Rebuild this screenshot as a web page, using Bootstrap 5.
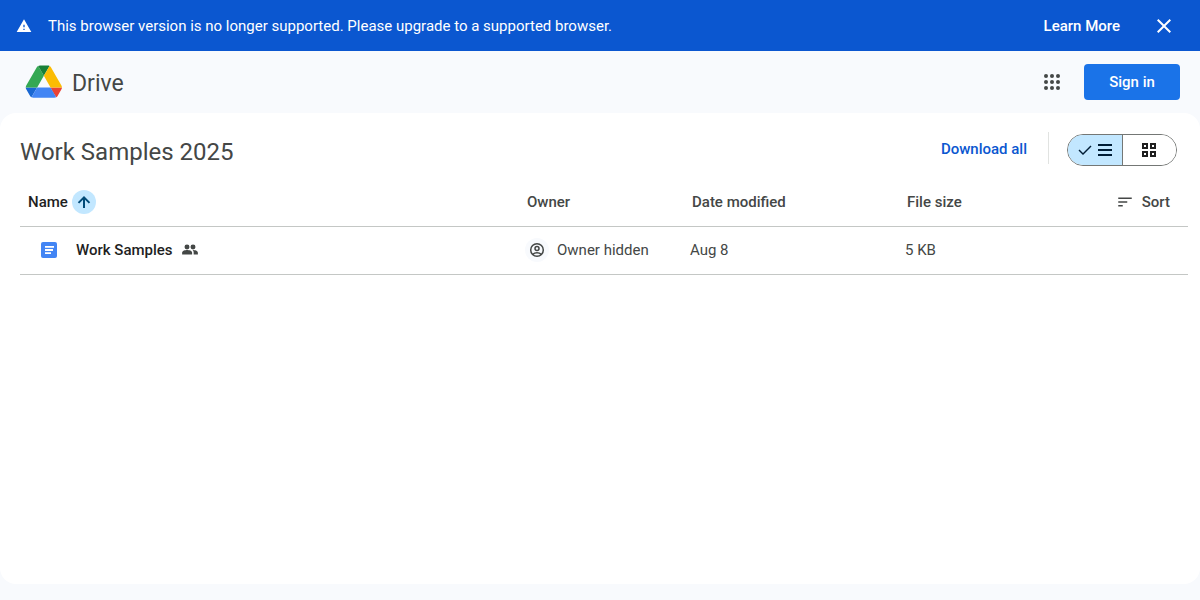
<!DOCTYPE html>
<html lang="en">
<head>
<meta charset="utf-8">
<meta name="viewport" content="width=device-width, initial-scale=1">
<title>Work Samples 2025 - Drive</title>
<link href="https://cdn.jsdelivr.net/npm/bootstrap@5.3.0/dist/css/bootstrap.min.css" rel="stylesheet">
<style>
  body { font-family: "Google Sans", Roboto, "Liberation Sans", sans-serif; font-size: 15px; line-height: 20px; color: #444746; background: #f8fafd; }
  svg { display: block; flex: none; fill: currentColor; }
  .btn { font-size: 15px; line-height: 20px; }
  .notice { background: #0b57d0; height: 51px; }
  .topbar { height: 62px; }
  .brand { font-size: 23px; line-height: 28px; color: #444746; }
  .signin { width: 96px; height: 36px; background: #1a73e8; border-radius: 4px; }
  .panel { background: #fff; border-radius: 16px; margin-bottom: 16px; padding: 19px 12px 0 20px; }
  .toolbar { height: 46px; padding-right: 11px; }
  .heading { font-size: 24px; line-height: 40px; }
  .download { color: #0b57d0; line-height: 34px; }
  .divider { width: 1px; height: 32px; background: #e1e3e1; margin: 0 18px 0 21px; }
  .views { width: 110px; height: 32px; margin-top: 2px; border: 1px solid #747775; border-radius: 16px; overflow: hidden; }
  .views button { flex: 1 1 0; background: #fff; color: #1f1f1f; }
  .views .chosen { background: #c2e7ff; color: #001d35; border-right: 1px solid #747775 !important; }
  .files { table-layout: fixed; width: 100%; }
  .files th, .files td { height: 48px; padding: 0; border-bottom: 1px solid #c4c7c5; vertical-align: middle; font-weight: 400; }
  .files thead th, .files tbody th, .strong { font-weight: 500; }
  .files thead th + th { padding-left: 2px; }
  .files .ink { color: #1f1f1f; }
  .file-cell { padding-left: 20px; gap: 8px; }
  .file-name { padding-left: 10px; }
  .sort { color: #444746; margin-right: 18px; }
  .arrow { width: 24px; height: 24px; background: #c2e7ff; color: #004a77; }
  .avatar { width: 24px; height: 24px; background: #f8fafd; }
</style>
</head>
<body class="d-flex flex-column min-vh-100">
  <div class="notice d-flex align-items-center text-white px-3" role="alert">
    <svg width="16" height="16" viewBox="0 0 24 24"><path d="M1 21h22L12 2 1 21zm12-3h-2v-2h2v2zm0-4h-2v-4h2v4z"/></svg>
    <span class="ms-3">This browser version is no longer supported. Please upgrade to a supported browser.</span>
    <a href="#" class="ms-auto text-white text-decoration-none strong">Learn More</a>
    <button type="button" class="btn border-0 p-0 text-white ms-4 me-2" aria-label="Close"><svg class="ms-2" width="24" height="24" viewBox="0 0 24 24"><path d="M19 6.41 17.59 5 12 10.59 6.41 5 5 6.41 10.59 12 5 17.59 6.41 19 12 13.41 17.59 19 19 17.59 13.41 12z"/></svg></button>
  </div>

  <header class="topbar d-flex align-items-center ps-4 pe-3">
    <a href="#" class="brand d-flex align-items-center text-decoration-none">
      <svg class="me-2" width="40" height="34" viewBox="0 0 96 82">
        <g transform="translate(4 1)">
          <path fill="#1967d2" d="m6.6 66.85 3.85 6.65c.8 1.4 1.95 2.5 3.3 3.3l13.75-23.8h-27.5c0 1.55.4 3.1 1.2 4.5z"/>
          <path fill="#34a853" d="m43.65 25-13.75-23.8c-1.35.8-2.5 1.9-3.3 3.3l-25.4 44a9.06 9.06 0 0 0 -1.2 4.5h27.5z"/>
          <path fill="#ea4335" d="m73.55 76.8c1.35-.8 2.5-1.9 3.3-3.3l1.6-2.75 7.65-13.25c.8-1.4 1.2-2.95 1.2-4.5h-27.5l5.85 11.5z"/>
          <path fill="#188038" d="m43.65 25 13.75-23.8c-1.35-.8-2.9-1.2-4.5-1.2h-18.5c-1.6 0-3.15.45-4.5 1.2z"/>
          <path fill="#4285f4" d="m59.8 53h-32.3l-13.75 23.8c1.35.8 2.9 1.2 4.5 1.2h50.8c1.6 0 3.15-.45 4.5-1.2z"/>
          <path fill="#fbbc04" d="m73.4 26.5-12.7-22c-.8-1.4-1.95-2.5-3.3-3.3l-13.75 23.8 16.15 28h27.45c0-1.55-.4-3.1-1.2-4.5z"/>
        </g>
      </svg>
      <span class="pt-1">Drive</span>
    </a>
    <button type="button" class="btn border-0 p-0 ms-auto me-3" aria-label="Google apps"><svg class="me-1" width="24" height="24" viewBox="0 0 24 24" fill="#444746"><g fill="#444746"><circle cx="6" cy="6" r="2"/><circle cx="12" cy="6" r="2"/><circle cx="18" cy="6" r="2"/><circle cx="6" cy="12" r="2"/><circle cx="12" cy="12" r="2"/><circle cx="18" cy="12" r="2"/><circle cx="6" cy="18" r="2"/><circle cx="12" cy="18" r="2"/><circle cx="18" cy="18" r="2"/></g></svg></button>
    <a href="#" class="signin d-flex align-items-center justify-content-center text-white text-decoration-none strong me-1">Sign in</a>
  </header>

  <main class="panel flex-grow-1">
    <div class="toolbar d-flex align-items-start">
      <h1 class="heading fw-normal mb-0">Work Samples 2025</h1>
      <button type="button" class="btn border-0 p-0 ms-auto download strong">Download all</button>
      <div class="divider"></div>
      <div class="views d-flex" role="group" aria-label="Layout">
        <button type="button" class="chosen border-0 p-0 d-flex align-items-center justify-content-center gap-1" aria-label="List layout" aria-pressed="true">
          <svg width="16" height="16" viewBox="0 0 16 16"><path d="M6 13 1.500 8.500l1-1L6 11l7.500-7.500 1 1z"/></svg>
          <svg width="16" height="16" viewBox="0 0 16 16"><path d="M1 2h14v2H1zM1 7h14v2H1zM1 12h14v2H1z"/></svg>
        </button>
        <button type="button" class="border-0 p-0 d-flex align-items-center justify-content-center" aria-label="Grid layout" aria-pressed="false">
          <svg width="16" height="16" viewBox="0 0 16 16"><path fill-rule="evenodd" d="M1 1h6v6H1zM3 3v2h2V3zM9 1h6v6H9zM11 3v2h2V3zM1 9h6v6H1zM3 11v2h2v-2zM9 9h6v6H9zM11 11v2h2v-2z"/></svg>
        </button>
      </div>
    </div>

    <table class="files">
      <colgroup><col><col style="width:165px"><col style="width:215px"><col style="width:150px"><col style="width:133px"></colgroup>
      <thead>
        <tr>
          <th scope="col" class="ink"><div class="d-flex align-items-center gap-1 ps-2">Name
            <span class="arrow rounded-circle d-flex align-items-center justify-content-center"><svg width="18" height="18" viewBox="0 0 18 18"><path d="M8 15V6.800L4.200 10.600 2.800 9.200 9 3l6.200 6.200-1.400 1.400L10 6.800V15z"/></svg></span></div></th>
          <th scope="col">Owner</th>
          <th scope="col">Date modified</th>
          <th scope="col">File size</th>
          <th scope="col"><button type="button" class="btn border-0 p-0 d-flex align-items-center gap-2 ms-auto sort strong"><svg width="18" height="18" viewBox="0 0 24 24"><path d="M3 18h6v-2H3v2zM3 6v2h18V6H3zm0 7h12v-2H3v2z"/></svg>Sort</button></th>
        </tr>
      </thead>
      <tbody>
        <tr>
          <th scope="row" class="ink"><div class="file-cell d-flex align-items-center">
            <svg width="18" height="18" viewBox="0 0 18 18"><rect x="1" y="1" width="16" height="16" rx="2" fill="#4285f4"/><path fill="#fff" d="M5 5h9v1.800H5zM5 8.100h8v1.800H5zM5 11.200h6V13H5z"/></svg>
            <span class="file-name">Work Samples</span>
            <svg width="18" height="18" viewBox="0 0 24 24"><g fill="#444746"><circle cx="8" cy="8" r="3.300"/><circle cx="16" cy="8" r="3.300"/><path d="M1.500 18v-2.500c0-2.500 4-3.500 6.700-3.500s6.600 1 6.600 3.500V18z"/><path d="M15.500 12.100c3 0 7 1 7 3.400V18h-5.600v-2.500c0-1.500-.5-2.600-1.400-3.400z"/></g></svg></div></th>
          <td><div class="d-flex align-items-center gap-2"><span class="avatar rounded-circle d-flex align-items-center justify-content-center"><svg width="16" height="16" viewBox="0 0 16 16" fill="none"><g fill="none" stroke="#444746" stroke-width="1.500"><circle cx="8" cy="8" r="6.300"/><circle cx="8" cy="6.600" r="2"/><path d="M3.800 12.400c2.200-2.200 6.200-2.200 8.400 0"/></g></svg></span>Owner hidden</div></td>
          <td>Aug 8</td>
          <td>5 KB</td>
          <td></td>
        </tr>
      </tbody>
    </table>
  </main>
<script src="https://cdn.jsdelivr.net/npm/bootstrap@5.3.0/dist/js/bootstrap.bundle.min.js"></script>
</body>
</html>
